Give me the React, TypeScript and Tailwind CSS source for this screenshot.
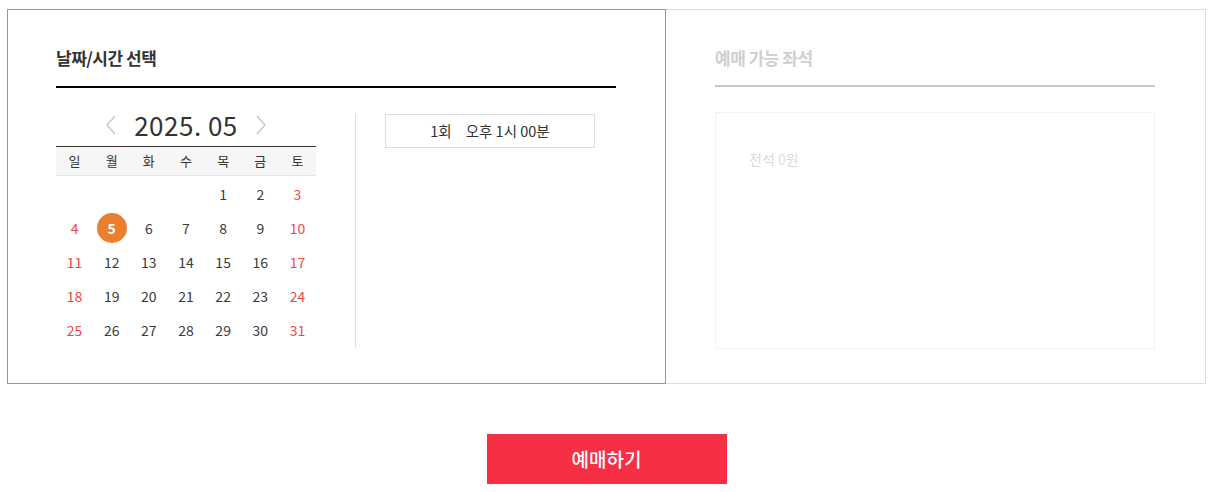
const FONT = { fontFamily: '"Noto Sans CJK KR", "Noto Sans", sans-serif' };

const weekDays = ['일', '월', '화', '수', '목', '금', '토'];

// May 2025 starts on Thursday
const cells: (number | null)[] = [null, null, null, null, ...Array.from({ length: 31 }, (_, i) => i + 1)];
const weeks: (number | null)[][] = [];
for (let i = 0; i < cells.length; i += 7) weeks.push(cells.slice(i, i + 7));

function Calendar() {
  return (
    <div className="w-[260px]">
      <div className="h-[34px] flex items-center justify-center gap-[14px] pb-[9px]">
        <svg width="14" height="20" viewBox="0 0 14 20" className="mr-[2px]">
          <path d="M11 1 L3 10 L11 19" fill="none" stroke="#c4c4c4" strokeWidth="1.3" />
        </svg>
        <span className="text-[26px] leading-none text-[#333] tracking-[0.5px]">2025. 05</span>
        <svg width="14" height="20" viewBox="0 0 14 20" className="ml-[2px]">
          <path d="M3 1 L11 10 L3 19" fill="none" stroke="#c4c4c4" strokeWidth="1.3" />
        </svg>
      </div>
      <div className="grid grid-cols-7 h-[30px] items-center bg-[#f6f6f6] border-t border-t-[#333] border-b border-b-[#e5e5e5]">
        {weekDays.map((d) => (
          <span key={d} className="text-center text-[13px] text-[#333]">
            {d}
          </span>
        ))}
      </div>
      <div className="pt-[1px]">
        {weeks.map((week, wi) => (
          <div key={wi} className="grid grid-cols-7 h-[34px] items-center">
            {week.map((day, di) => {
              const red = di === 0 || di === 6;
              return (
                <div key={di} className="flex items-center justify-center">
                  {day === 5 ? (
                    <span className="w-[30px] h-[30px] rounded-full bg-[#eb7f30] text-white text-[14px] font-bold flex items-center justify-center">
                      5
                    </span>
                  ) : (
                    <span className={`text-[14px] ${red ? 'text-[#f0473f]' : 'text-[#3a3a3a]'}`}>{day ?? ''}</span>
                  )}
                </div>
              );
            })}
          </div>
        ))}
      </div>
    </div>
  );
}

export default function App() {
  return (
    <div className="bg-white w-[1213px] h-[492px] pt-[9px]" style={FONT}>
      <div className="flex mx-[7px]">
        <section className="w-[659px] h-[375px] border border-[#e8803a] pl-[48px] pr-[49px] pt-[36px]">
          <h2 className="text-[17px] font-bold text-[#333] leading-[24px] tracking-[-0.5px]">날짜/시간 선택</h2>
          <div className="h-[2px] bg-black mt-[16px]" />
          <div className="flex mt-[24px]">
            <Calendar />
            <div className="w-px h-[234px] bg-[#ddd] ml-[39px] mt-[2px]" />
            <div className="pl-[29px] pt-[2px]">
              <button className="w-[210px] h-[34px] border border-[#ddd] text-[14.5px] text-[#333] flex items-center justify-center">
                <span className="mr-[14px]">1회</span>
                <span>오후 1시 00분</span>
              </button>
            </div>
          </div>
        </section>
        <section className="w-[540px] h-[375px] border border-[#ddd] border-l-0 pl-[49px] pr-[50px] pt-[36px]">
          <h2 className="text-[17px] font-bold text-[#cfcfcf] leading-[24px] tracking-[-0.5px]">예매 가능 좌석</h2>
          <div className="h-[2px] bg-[#c8c8c8] mt-[15px]" />
          <div className="h-[237px] border border-[#f3f3f3] mt-[25px] pl-[33px] pt-[36px]">
            <p className="text-[14px] text-[#d9d9d9]">
              전석 <span className="text-[#fbd3d3]">0</span>원
            </p>
          </div>
        </section>
      </div>
      <div className="flex justify-center mt-[50px]">
        <button className="w-[240px] h-[50px] bg-[#f62f45] text-white text-[19px] font-medium">예매하기</button>
      </div>
    </div>
  );
}
